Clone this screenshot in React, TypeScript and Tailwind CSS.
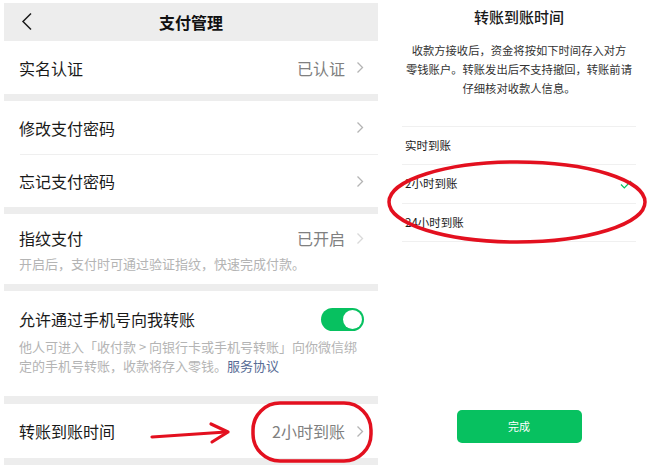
import React from "react";

const font = { fontFamily: '"Noto Sans CJK SC", "Noto Sans", sans-serif' };

function Chevron({ className = "" }: { className?: string }) {
  return (
    <svg width="8" height="13" viewBox="0 0 8 13" className={className}>
      <path d="M1.5 1.5 L6.5 6.5 L1.5 11.5" fill="none" stroke="#b4b4b4" strokeWidth="1.3" />
    </svg>
  );
}

function Sep({ h = "h-[7px]" }: { h?: string }) {
  return <div className={`${h} bg-[#ededed]`} />;
}

export default function App() {
  return (
    <div className="relative w-[660px] h-[470px] bg-white overflow-hidden flex" style={font}>
      {/* Left panel */}
      <div className="ml-[4px] w-[374px] pt-[3px] flex flex-col">
        <div className="h-[38px] bg-[#ededed] relative flex items-center justify-center">
          <svg width="12" height="20" viewBox="0 0 12 20" className="absolute left-[17px] top-[9px]">
            <path d="M10 1.5 L2 9.5 L10 17.5" fill="none" stroke="#1a1a1a" strokeWidth="1.5" />
          </svg>
          <span className="text-[16px] font-semibold text-[#111]">支付管理</span>
        </div>
        <div className="h-[53px] flex items-center pl-[15px] pr-[14px]">
          <span className="text-[16px] text-[#1a1a1a]">实名认证</span>
          <span className="ml-auto text-[16px] text-[#808080]">已认证</span>
          <Chevron className="ml-[11px]" />
        </div>
        <Sep />
        <div className="h-[53px] flex items-center pl-[15px] pr-[14px]">
          <span className="text-[16px] text-[#1a1a1a]">修改支付密码</span>
          <Chevron className="ml-auto" />
        </div>
        <div className="h-px bg-[#efefef] ml-[16px]" />
        <div className="h-[52px] flex items-center pl-[15px] pr-[14px]">
          <span className="text-[16px] text-[#1a1a1a]">忘记支付密码</span>
          <Chevron className="ml-auto" />
        </div>
        <Sep />
        <div className="h-[70px] flex flex-col pl-[15px] pr-[14px] pt-[13px]">
          <div className="flex items-center h-[22px]">
            <span className="text-[16px] text-[#1a1a1a]">指纹支付</span>
            <span className="ml-auto text-[16px] text-[#808080]">已开启</span>
            <Chevron className="ml-[11px] opacity-50" />
          </div>
          <div className="mt-[5px] text-[13px] leading-[20px] text-[#b4b4b4]">开启后，支付时可通过验证指纹，快速完成付款。</div>
        </div>
        <Sep />
        <div className="h-[105px] flex flex-col pl-[15px] pr-[14px] pt-[16px]">
          <div className="flex items-center h-[24px]">
            <span className="text-[16px] text-[#1a1a1a]">允许通过手机号向我转账</span>
            <div className="ml-auto w-[43px] h-[23px] rounded-full bg-[#07c160] flex items-center justify-end pr-[2px]">
              <div className="w-[19px] h-[19px] rounded-full bg-white" />
            </div>
          </div>
          <div className="mt-[6px] text-[13px] leading-[19px] text-[#b4b4b4] whitespace-nowrap">
            <div>他人可进入「收付款 &gt; 向银行卡或手机号转账」向你微信绑</div>
            <div>
              定的手机号转账，收款将存入零钱。<span className="text-[#576b95]">服务协议</span>
            </div>
          </div>
        </div>
        <Sep h="h-[8px]" />
        <div className="h-[54px] flex items-center pl-[15px] pr-[14px]">
          <span className="text-[16px] text-[#1a1a1a]">转账到账时间</span>
          <span className="ml-auto text-[16px] text-[#808080]">2小时到账</span>
          <Chevron className="ml-[11px]" />
        </div>
        <Sep />
      </div>

      {/* Right panel */}
      <div className="flex-1 flex flex-col pt-[7px]">
        <div className="text-center text-[15px] leading-[20px] font-medium text-[#1a1a1a]">转账到账时间</div>
        <div className="mt-[14px] text-center text-[11.3px] leading-[19px] text-[#333]">
          <div>收款方接收后，资金将按如下时间存入对方</div>
          <div>零钱账户。转账发出后不支持撤回，转账前请</div>
          <div>仔细核对收款人信息。</div>
        </div>
        <div className="mx-[24px] mt-[28px] flex flex-col">
          <div className="h-px bg-[#f0f0f0]" />
          <div className="h-[37px] flex items-center pl-[3px] text-[11.5px] text-[#1a1a1a]">实时到账</div>
          <div className="h-px bg-[#f0f0f0]" />
          <div className="h-[38px] flex items-center pl-[3px] text-[11.5px] text-[#1a1a1a]">
            2小时到账
            <svg width="12" height="9" viewBox="0 0 12 9" className="ml-auto mr-[4px]">
              <path d="M1 4.5 L4.3 7.8 L11 1" fill="none" stroke="#07c160" strokeWidth="1.2" />
            </svg>
          </div>
          <div className="h-px bg-[#f0f0f0]" />
          <div className="h-[37px] flex items-center pl-[3px] text-[11.5px] text-[#1a1a1a]">24小时到账</div>
          <div className="h-px bg-[#f0f0f0]" />
        </div>
        <div className="mt-[168px] flex justify-center">
          <div className="w-[125px] h-[33px] rounded-[5px] bg-[#07c160] flex items-center justify-center text-[11px] text-white">完成</div>
        </div>
      </div>

      {/* Red annotations */}
      <svg className="absolute left-0 top-0 pointer-events-none" width="660" height="470" viewBox="0 0 660 470">
        <rect x="253" y="403" width="118" height="58" rx="27" fill="none" stroke="#e3101f" strokeWidth="3.5" />
        <path d="M152 437 L226 432" stroke="#e3101f" strokeWidth="3.2" fill="none" strokeLinecap="round" />
        <path d="M211 424 L228 432 L212 442" stroke="#e3101f" strokeWidth="3.2" fill="none" strokeLinecap="round" strokeLinejoin="round" />
        <ellipse cx="517" cy="202" rx="128" ry="40" fill="none" stroke="#e3101f" strokeWidth="3.5" />
      </svg>
    </div>
  );
}
